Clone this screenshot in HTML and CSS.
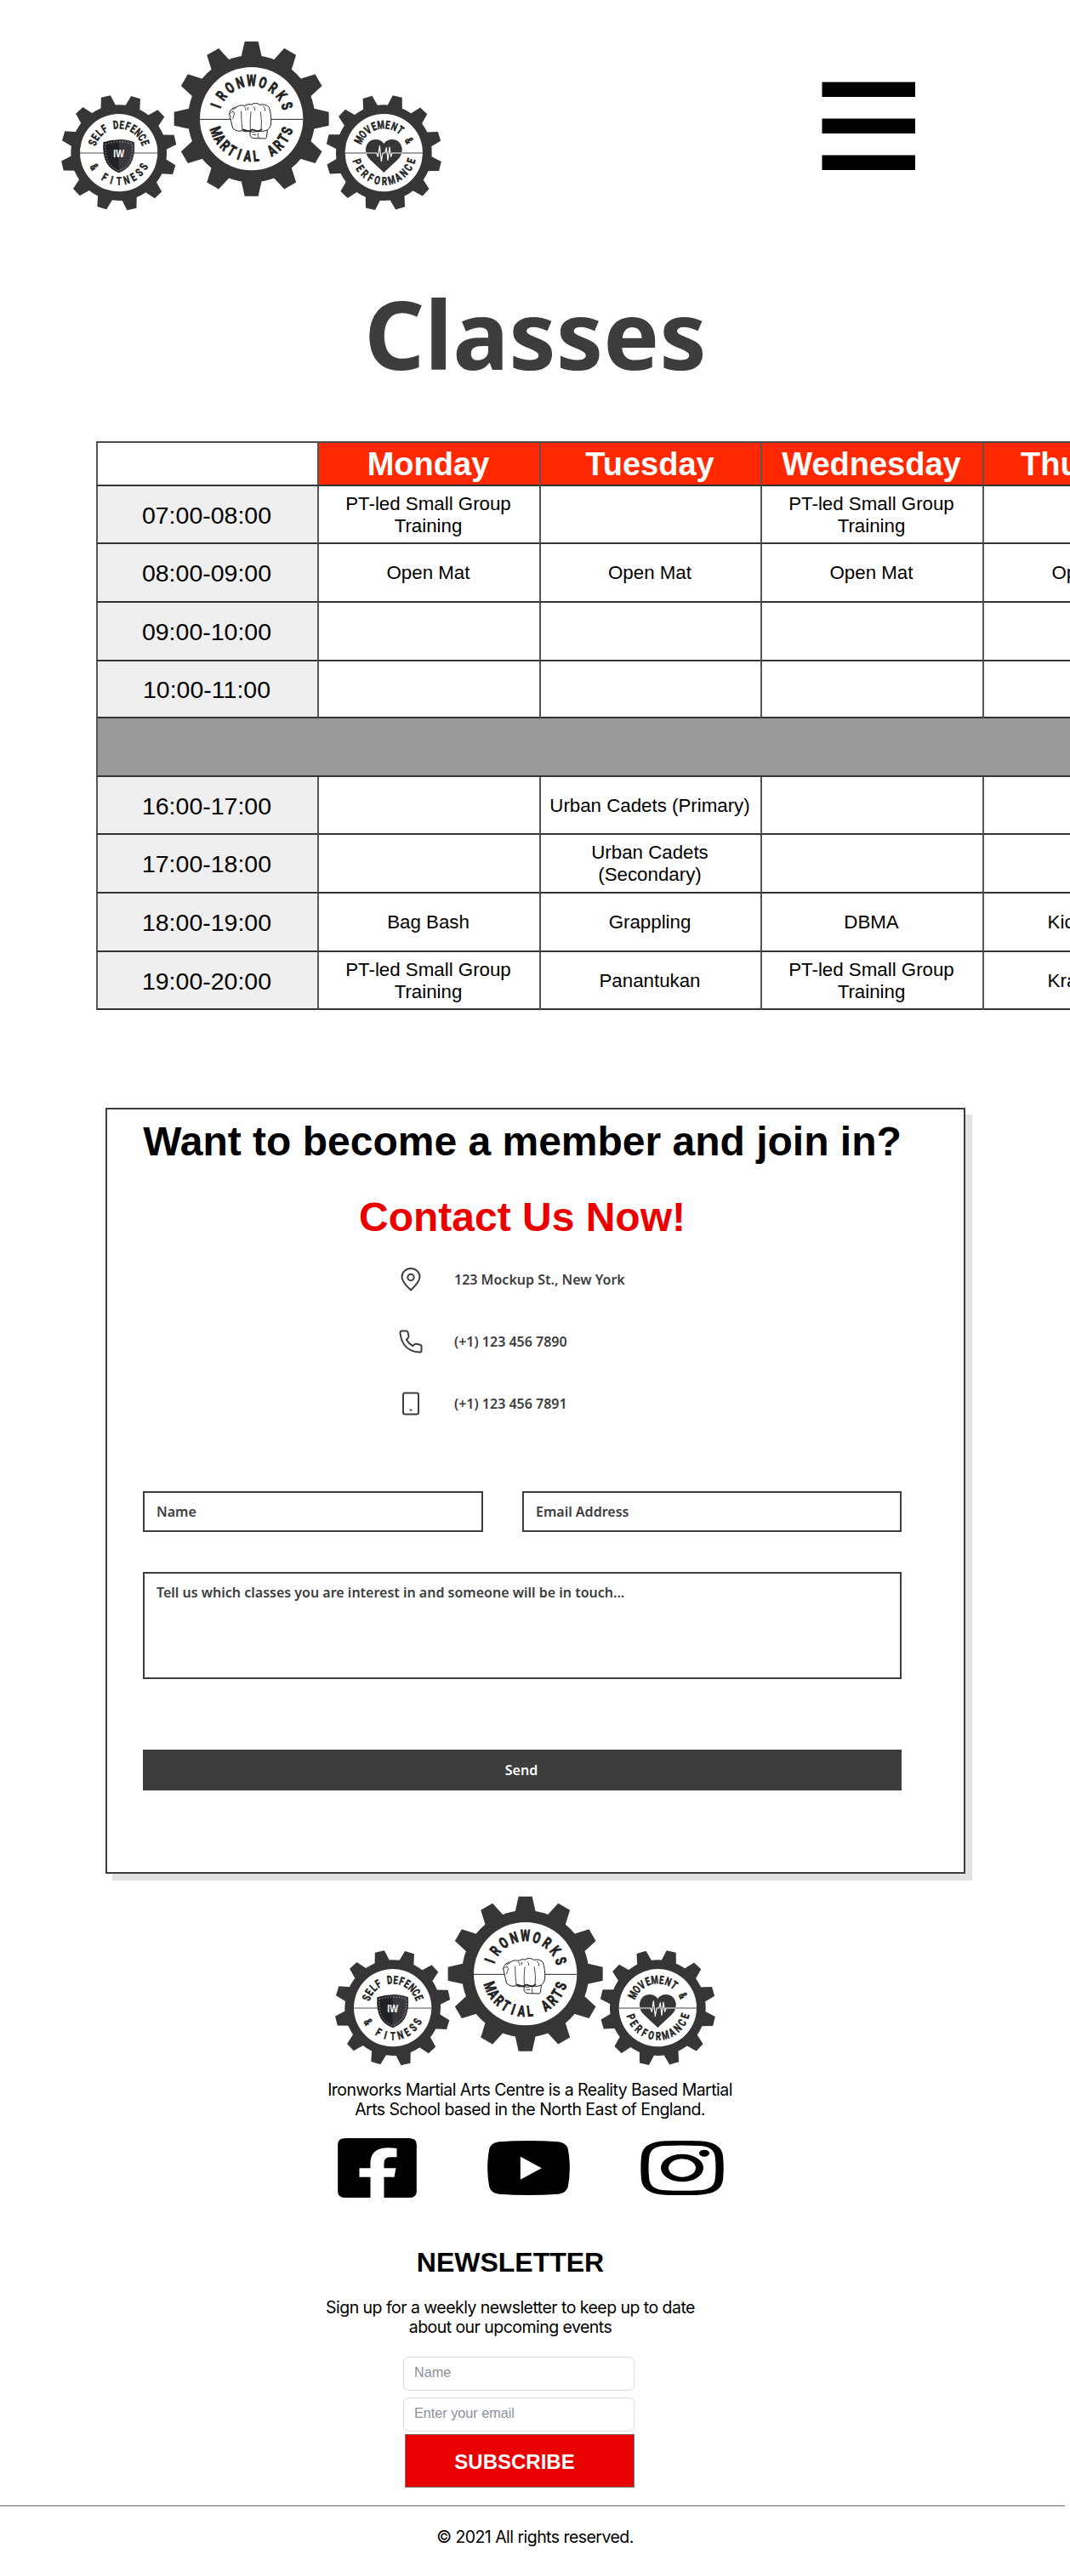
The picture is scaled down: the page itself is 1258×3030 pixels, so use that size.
FILE: index.html
```html
<!DOCTYPE html>
<html lang="en">
<head>
<meta charset="utf-8">
<title>Classes - Ironworks Martial Arts</title>
<link rel="stylesheet" href="styles.css">
</head>
<body>
<svg class="defs" width="0" height="0" aria-hidden="true">
  <defs>
    <path id="tooth-lg" d="M-37-215L-24-273H24L37-215Z"/>
    <path id="tooth-sm" d="M-28-160L-17-204H17L28-160Z"/>
    <g id="gear-lg">
      <circle r="224"/>
      <g id="quarter-lg"><use href="#tooth-lg"/><use href="#tooth-lg" transform="rotate(30)"/><use href="#tooth-lg" transform="rotate(60)"/></g>
      <use href="#quarter-lg" transform="rotate(90)"/><use href="#quarter-lg" transform="rotate(180)"/><use href="#quarter-lg" transform="rotate(270)"/>
      <circle r="182" fill="#fff"/>
    </g>
    <g id="gear-sm">
      <circle r="169"/>
      <g id="quarter-sm"><use href="#tooth-sm"/><use href="#tooth-sm" transform="rotate(30)"/><use href="#tooth-sm" transform="rotate(60)"/></g>
      <use href="#quarter-sm" transform="rotate(90)"/><use href="#quarter-sm" transform="rotate(180)"/><use href="#quarter-sm" transform="rotate(270)"/>
      <circle r="137" fill="#fff"/>
    </g>
    <symbol id="logo" viewBox="0 0 1500 690">
      <g fill="#383536" transform="translate(737 329)">
        <use href="#gear-lg"/>
        <path d="M-182 2H182" stroke="#222" stroke-width="3"/>
        <g class="arc-text arc-text-lg" data-text="IRONWORKS" data-baseline="-115" data-from="-70" data-to="70"></g>
        <g class="arc-text arc-text-lg" data-text="MARTIAL ARTS" data-baseline="151" data-from="70" data-to="-71"></g>
        <g fill="#fff" stroke="#222" stroke-width="3" stroke-linejoin="round" stroke-linecap="round">
          <path d="M-4 44L-5 58Q-2 70 14 69L50 70Q56 66 54 58L56 42Z"/>
          <path d="M-78-18Q-74-40-50-42Q-44-50-24-46Q-10-54 0-50Q14-60 30-49Q50-54 62-40Q70-20 69 16Q66 38 50 42Q36 48 22 42Q8 52-6 42Q-20 50-32 42Q-50 48-66 34Q-72 10-78-18Z"/>
          <path fill="none" d="M-72-22Q-62-30-60-18Q-64-8-66 0M-36-26Q-36 10-32 40M-2-24Q-6 10-4 40M32-24Q38 10 34 40M-24-42Q-18-38-20-30M-12-40L-13-32M8-42Q14-38 12-30M42-44Q50-38 48-28M-66-32L-56-38M24 52Q20 60 26 68M4 56L16 57" stroke-width="2.5"/>
          <path fill="none" d="M-30 38L-8 45L2 38L24 45L36 38" stroke-width="5"/>
        </g>
      </g>
      <g fill="#383536" transform="translate(269 449)">
        <use href="#gear-sm" transform="rotate(17)"/>
        <path d="M-137 1H137" stroke="#555" stroke-width="3"/>
        <g class="arc-text arc-text-sm" data-text="SELF DEFENCE" data-baseline="-85" data-from="-69" data-to="69"></g>
        <g class="arc-text arc-text-sm" data-text="&amp; FITNESS" data-baseline="114" data-from="60" data-to="-61"></g>
        <path fill="#222226" d="M-55-37Q0-56 55-37Q58 10 42 38Q28 60 0 71Q-28 60-42 38Q-58 10-55-37Z"/>
        <path fill="#38383e" d="M0-47Q30-47 55-37Q58 10 42 38Q28 60 0 71Z"/>
        <path fill="none" stroke="#ddd" stroke-width="3" stroke-dasharray="3 7" d="M-47-31Q0-46 47-31Q50 8 36 34Q24 54 0 63Q-24 54-36 34Q-50 8-47-31Z"/>
        <text class="badge-text" text-anchor="middle" y="15" textLength="38" lengthAdjust="spacingAndGlyphs">IW</text>
      </g>
      <g fill="#383536" transform="translate(1204 449)">
        <use href="#gear-sm" transform="rotate(13.5)"/>
        <path d="M-137 1H137" stroke="#444" stroke-width="3"/>
        <g class="arc-text arc-text-sm" data-text="MOVEMENT &amp;" data-baseline="-85" data-from="-63" data-to="64"></g>
        <g class="arc-text arc-text-sm" data-text="PERFORMANCE" data-baseline="114" data-from="71" data-to="-73"></g>
        <path d="M0 70L-48 25Q-66 8-64-16Q-58-46-30-47Q-10-47 0-32Q10-47 30-47Q58-46 64-16Q66 8 48 25Z"/>
        <path fill="none" stroke="#fff" stroke-width="3.5" stroke-linejoin="round" d="M-64 1H-26L-21 14L-15-24L-9 30L-4 1H4L9-18L14 26L20-20L25 14L29 1H64"/>
      </g>
    </symbol>
  </defs>
</svg>
<script src="arc-text.js"></script>

<header class="header">
  <svg class="logo" role="img" aria-label="Ironworks Martial Arts"><use href="#logo"/></svg>
  <svg class="menu" viewBox="0 0 110 105" role="img" aria-label="Menu"><path d="M.5 .5H110V18H.5ZM.5 43.5H110V61H.5ZM.5 86.5H110V104H.5Z"/></svg>
</header>

<h1 class="title">Classes</h1>

<div class="timetable-wrap">
  <div class="timetable">
    <div class="corner"></div><div class="day">Monday</div><div class="day">Tuesday</div><div class="day">Wednesday</div><div class="day">Thursday</div>
    <div class="time">07:00-08:00</div><div>PT-led Small Group Training</div><div></div><div>PT-led Small Group Training</div><div></div>
    <div class="time">08:00-09:00</div><div>Open Mat</div><div>Open Mat</div><div>Open Mat</div><div>Open Mat</div>
    <div class="time">09:00-10:00</div><div></div><div></div><div></div><div></div>
    <div class="time">10:00-11:00</div><div></div><div></div><div></div><div></div>
    <div class="break"></div>
    <div class="time">16:00-17:00</div><div></div><div>Urban Cadets (Primary)</div><div></div><div></div>
    <div class="time">17:00-18:00</div><div></div><div>Urban Cadets (Secondary)</div><div></div><div></div>
    <div class="time">18:00-19:00</div><div>Bag Bash</div><div>Grappling</div><div>DBMA</div><div>Kickboxing</div>
    <div class="time">19:00-20:00</div><div>PT-led Small Group Training</div><div>Panantukan</div><div>PT-led Small Group Training</div><div>Krav Maga</div>
  </div>
</div>

<section class="contact">
  <h2>Want to become a member and join in?</h2>
  <h2 class="accent">Contact Us Now!</h2>
  <ul class="details">
    <li><svg viewBox="0 0 28 28"><path d="M14 26.500Q3.500 17 3.500 10.800A10.500 9.800 0 0 1 24.500 10.800Q24.500 17 14 26.500Z"/><circle cx="14" cy="11.500" r="3.700"/></svg><span>123 Mockup St., New York</span></li>
    <li><svg viewBox="0 0 28 28"><path d="M3.500 1.500H8.500Q10 1.500 10.500 3L11.500 7.500Q11.700 9 10.500 10L8.800 11.700Q11.500 16.500 16.300 19.200L18 17.500Q19 16.500 20.500 16.700L25 17.700Q26.500 18 26.500 19.500V24.500Q26.500 26.800 24 26.600Q4 25 1.500 4Q1.300 1.500 3.500 1.500Z"/></svg><span>(+1) 123 456 7890</span></li>
    <li><svg viewBox="0 0 28 28"><rect x="5" y="1.500" width="18" height="25" rx="2"/><path d="M13.500 21.500H14.500"/></svg><span>(+1) 123 456 7891</span></li>
  </ul>
  <form class="form">
    <input class="name" type="text" placeholder="Name">
    <input type="text" placeholder="Email Address">
    <textarea placeholder="Tell us which classes you are interest in and someone will be in touch..."></textarea>
    <button type="button">Send</button>
  </form>
</section>

<footer class="footer">
  <svg class="logo footer-logo" role="img" aria-label="Ironworks Martial Arts"><use href="#logo"/></svg>
  <p class="about">Ironworks Martial Arts Centre is a Reality Based Martial<br>Arts School based in the North East of England.</p>
  <div class="social">
    <svg width="93" height="70" viewBox="0 0 278 210"><path d="M28 0H250Q278 0 278 22V188Q278 210 250 210H163V137H199L205 106H163V88Q163 67 186 67H208V36Q196 34 178 34Q115 34 115 88V106H76V137H115V210H28Q0 210 0 188V22Q0 0 28 0Z"/></svg>
    <svg width="97" height="64" viewBox="0 0 290 192"><path fill-rule="evenodd" d="M40 4Q145-4 250 4Q278 7 284 30Q296 96 284 162Q278 185 250 188Q145 196 40 188Q12 185 6 162Q-6 96 6 30Q12 7 40 4ZM116 56V137L191 97Z"/></svg>
    <svg width="98" height="64" viewBox="0 0 292 192"><path fill-rule="evenodd" d="M86 1Q146-2 206 1Q286 4 290 56Q294 96 290 136Q286 188 206 191Q146 194 86 191Q6 188 2 136Q-2 96 2 56Q6 4 86 1ZM86 18Q146 15 206 18Q258 20 262 56Q267 96 262 136Q258 173 206 175Q146 178 86 175Q34 173 30 136Q25 96 30 56Q34 20 86 18Z"/><path fill-rule="evenodd" d="M71 96A75 49 0 0 1 221 96A75 49 0 0 1 71 96ZM98 96A48 32 0 0 0 194 96A48 32 0 0 0 98 96Z"/><ellipse cx="224" cy="44" rx="18" ry="12"/></svg>
  </div>
  <div class="newsletter">
    <h3>NEWSLETTER</h3>
    <p>Sign up for a weekly newsletter to keep up to date<br>about our upcoming events</p>
    <form class="signup">
      <input type="text" placeholder="Name">
      <input type="text" placeholder="Enter your email">
      <button type="button">SUBSCRIBE</button>
    </form>
  </div>
  <hr>
  <p class="copyright">© 2021 All rights reserved.</p>
</footer>
</body>
</html>
```
FILE: arc-text.js
```js
// Sets the condensed lettering of the badges, one letter at a time round the circle.
document.querySelectorAll('.arc-text').forEach(function (group) {
  var letters = group.dataset.text.split('');
  var from = +group.dataset.from;
  var step = (+group.dataset.to - from) / (letters.length - 1);
  letters.forEach(function (letter, i) {
    if (letter === ' ') return;
    var text = document.createElementNS('http://www.w3.org/2000/svg', 'text');
    text.textContent = letter;
    text.setAttribute('text-anchor', 'middle');
    text.setAttribute('transform', 'rotate(' + (from + step * i) + ') translate(0 ' + group.dataset.baseline + ') scale(.72 1)');
    group.appendChild(text);
  });
});
```
FILE: styles.css
```css
* { box-sizing: border-box; }
body {
  margin: 0;
  background: #fff;
  color: #000;
  font-family: Inter, "Liberation Sans", sans-serif;
  overflow-x: hidden;
}
.defs { display: block; }
h1, h2, h3, p, ul { margin: 0; padding: 0; }

.header {
  display: flex;
  justify-content: space-between;
  align-items: flex-start;
  height: 317px;
  padding: 30px 182px 0 50px;
}
.logo { display: block; width: 500px; height: 230px; }
.menu { width: 110px; height: 105px; margin-top: 66px; }
.arc-text { font-family: Roboto, "Liberation Sans", sans-serif; font-weight: 700; fill: #222; stroke: #222; stroke-width: 2.5px; }
.arc-text-lg { font-size: 53px; }
.arc-text-sm { font-size: 40px; stroke-width: 1.5px; }
.badge-text { font: 700 36px "Liberation Sans", sans-serif; fill: #fff; }

.title {
  height: 202px;
  padding-left: 1px;
  line-height: 150px;
  text-align: center;
  font-family: "Noto Sans", sans-serif;
  font-weight: 700;
  font-size: 110.500px;
  color: #3d3d3d;
}

.timetable-wrap { overflow: hidden; padding-left: 113px; }
.timetable {
  display: grid;
  grid-template-columns: 260px 261px 260px 261px 261px;
  grid-template-rows: 51px 68px 69px 69px 67px 69px 68px 69px 69px 68px;
  width: 1303px;
  border-top: 2px solid #4a4a4a;
  font: 22.300px/26px "Liberation Sans", sans-serif;
}
.timetable > div {
  display: flex;
  align-items: center;
  justify-content: center;
  text-align: center;
  padding: 1px 10px 0 8px;
  border-left: 2px solid #555;
  border-bottom: 2px solid #333;
}
.timetable > .day { background: #ff2800; color: #fff; font-size: 38px; font-weight: 700; }
.timetable > .time { background: #efefef; font-size: 28.500px; }
.timetable > .break { grid-column: 1 / -1; background: #999; }

.contact {
  width: 1011px;
  height: 901px;
  margin: 115px 0 0 124px;
  padding: 10px 73px 0 42px;
  border: 2px solid #3d3d3d;
  box-shadow: 8px 8px 0 #e3e3e3;
}
.contact h2 {
  font: 700 48px/55px "Liberation Sans", sans-serif;
  text-align: center;
  white-space: nowrap;
  margin-bottom: 34px;
}
.contact .accent { color: #eb0000; margin-bottom: 32px; }
.details { list-style: none; padding-left: 301px; }
.details li {
  display: flex;
  align-items: center;
  gap: 37px;
  height: 28px;
  margin-bottom: 45px;
  font: 600 16px/22px "Noto Sans", sans-serif;
  color: #3d3d3d;
}
.details svg { width: 28px; height: 28px; fill: none; stroke: #3d3d3d; stroke-width: 2; stroke-linecap: round; stroke-linejoin: round; }
.form {
  display: grid;
  grid-template-columns: 400px 446px;
  grid-template-rows: 48px 173px 178px;
  column-gap: 46px;
  margin-top: 89px;
}
.form input, .form textarea, .form button {
  margin: 0;
  border: 2px solid #3d3d3d;
  border-radius: 0;
  font: 600 16px/22px "Noto Sans", sans-serif;
  color: #3d3d3d;
  padding: 0 14px;
  background: #fff;
}
.form ::placeholder { color: #3d3d3d; opacity: 1; }
.form textarea { grid-column: 1 / -1; margin-top: 47px; height: 126px; padding-top: 11px; resize: none; }
.form button { grid-column: 1 / -1; margin-top: 83px; height: 48px; padding-right: 16px; background: #3d3d3d; color: #fff; }

.footer { height: 826px; }
.footer-logo { margin: 8px 0 0 372px; }
.about {
  width: 510px;
  margin: 5px 0 0 368px;
  text-align: center;
}
.about, .newsletter p, .copyright { font-size: 19.500px; line-height: 23px; letter-spacing: -.54px; }
.social { display: flex; align-items: center; margin: 22px 0 0 397px; }
.social svg + svg { margin-left: 83px; }
.newsletter { width: 434px; margin: 56px 0 0 383px; }
.newsletter h3 { font: 700 32px/40px "Liberation Sans", sans-serif; text-align: center; }
.newsletter p { margin-top: 22px; text-align: center; white-space: nowrap; }
.signup { display: flex; flex-direction: column; width: 272px; margin: 23px 0 0 91px; }
.signup input {
  height: 40px;
  margin: 0 0 8px;
  padding: 0 12px 4px;
  border: 1px solid #dedede;
  border-radius: 6px;
  font: 16.200px "Liberation Sans", sans-serif;
}
.signup input + input { margin-bottom: 3px; }
.signup ::placeholder { color: #8b919b; opacity: 1; }
.signup button {
  width: 270px;
  height: 63px;
  margin-left: 2px;
  padding: 2px 12px 0 0;
  border: 1px solid #777;
  background: #eb0000;
  color: #fff;
  font: 700 24px "Liberation Sans", sans-serif;
}
hr { width: 1252px; height: 1px; margin: 21px 0 0; border: 0; background: #6b6b6b; }
.copyright { margin-top: 25px; text-align: center; }
```
